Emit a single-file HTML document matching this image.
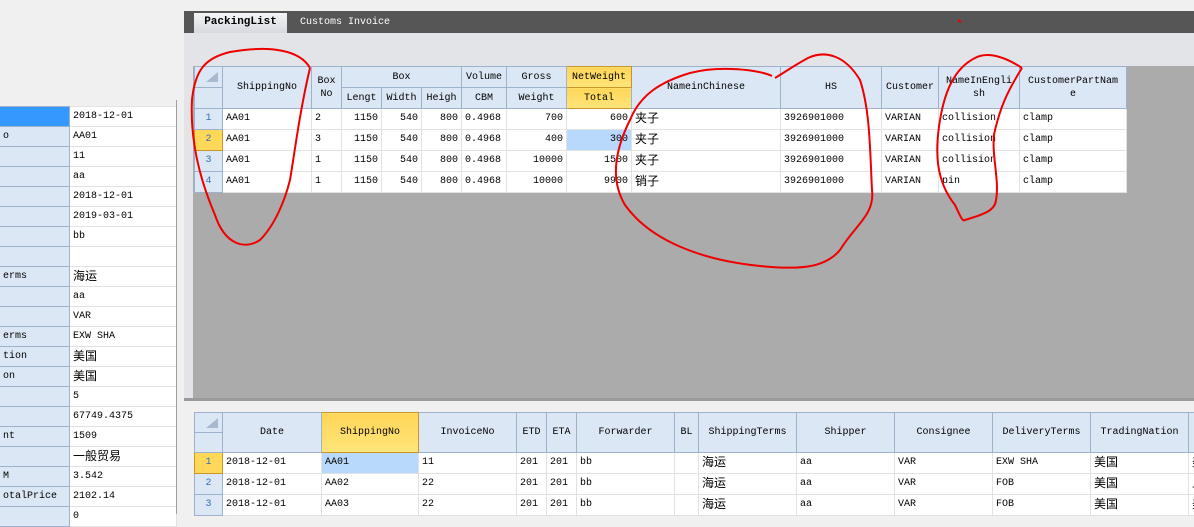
<!DOCTYPE html>
<html><head><meta charset="utf-8"><style>
body{margin:0;width:1194px;height:514px;overflow:hidden;background:#f0f0f0;position:relative;font-family:"Liberation Mono","Noto Sans CJK SC",monospace;font-size:10px;color:#000}
.abs{position:absolute}
table{border-collapse:collapse;table-layout:fixed;position:absolute}
td{padding:0 3px;white-space:nowrap;overflow:hidden;height:20px;line-height:18px;vertical-align:middle;border:1px solid #e2e2e2;background:#fff}
td.h{background:#dbe7f4;border-color:#9eb3cb;text-align:center;line-height:13px;white-space:normal}
td.rn{background:#dbe7f4;border-color:#9eb3cb;text-align:center;color:#3a6fb0}
td.sel{background:#ffd85a;border-color:#c9962a}
td.hs{background:linear-gradient(#ffd658,#ffe57a);border-color:#c9962a}
td.r{text-align:right}
td.blue{background:#b8d9fb}
.c{font-size:12px}
.pg td{height:19px}
</style></head><body>
<table class="pg" style="left:-1px;top:106px;width:177px">
<colgroup><col style="width:70px"><col style="width:107px"></colgroup>
<tr><td class="h" style="background:#3399ff"></td><td>2018-12-01</td></tr>
<tr><td class="h" style="text-align:left">o</td><td>AA01</td></tr>
<tr><td class="h"></td><td>11</td></tr>
<tr><td class="h"></td><td>aa</td></tr>
<tr><td class="h"></td><td>2018-12-01</td></tr>
<tr><td class="h"></td><td>2019-03-01</td></tr>
<tr><td class="h"></td><td>bb</td></tr>
<tr><td class="h"></td><td></td></tr>
<tr><td class="h" style="text-align:left">erms</td><td class="c">海运</td></tr>
<tr><td class="h"></td><td>aa</td></tr>
<tr><td class="h"></td><td>VAR</td></tr>
<tr><td class="h" style="text-align:left">erms</td><td>EXW SHA</td></tr>
<tr><td class="h" style="text-align:left">tion</td><td class="c">美国</td></tr>
<tr><td class="h" style="text-align:left">on</td><td class="c">美国</td></tr>
<tr><td class="h"></td><td>5</td></tr>
<tr><td class="h"></td><td>67749.4375</td></tr>
<tr><td class="h" style="text-align:left">nt</td><td>1509</td></tr>
<tr><td class="h"></td><td class="c">一般贸易</td></tr>
<tr><td class="h" style="text-align:left">M</td><td>3.542</td></tr>
<tr><td class="h" style="text-align:left">otalPrice</td><td>2102.14</td></tr>
<tr><td class="h"></td><td>0</td></tr>
</table>
<div class="abs" style="left:176px;top:100px;width:1px;height:414px;background:#a0a0a0"></div>
<div class="abs" style="left:184px;top:11px;width:1010px;height:22px;background:#565656"></div>
<div class="abs" style="left:194px;top:13px;width:93px;height:20px;background:linear-gradient(#f4f5f7,#d6d9df);font-weight:bold;font-size:11px;line-height:19px;text-align:center">PackingList</div>
<div class="abs" style="left:300px;top:13px;color:#fff;line-height:19px;font-size:10px">Customs Invoice</div>
<div class="abs" style="left:184px;top:33px;width:1010px;height:365px;background:#e3e4e8"></div>
<div class="abs" style="left:193px;top:66px;width:1001px;height:332px;background:#ababab"></div>
<table style="left:194px;top:66px;width:932px">
<colgroup><col style="width:28px"><col style="width:89px"><col style="width:30px"><col style="width:40px"><col style="width:40px"><col style="width:40px"><col style="width:45px"><col style="width:60px"><col style="width:65px"><col style="width:149px"><col style="width:101px"><col style="width:57px"><col style="width:81px"><col style="width:107px"></colgroup>
<tr><td class="h" style="height:19px"><svg width="18" height="12" style="float:right"><path d="M17 1V11H5Z" fill="#a8b9cf"/></svg></td><td class="h" rowspan="2">ShippingNo</td><td class="h" rowspan="2">Box<br>No</td><td class="h" colspan="3">Box</td><td class="h">Volume</td><td class="h">Gross</td><td class="h hs">NetWeight</td><td class="h" rowspan="2">NameinChinese</td><td class="h" rowspan="2">HS</td><td class="h" rowspan="2">Customer</td><td class="h" rowspan="2">NameInEngli<br>sh</td><td class="h" rowspan="2">CustomerPartNam<br>e</td></tr>
<tr><td class="h" style="height:19px"></td><td class="h">Lengt</td><td class="h">Width</td><td class="h">Heigh</td><td class="h">CBM</td><td class="h">Weight</td><td class="h hs">Total</td></tr>
<tr><td class="rn">1</td><td>AA01</td><td>2</td><td class="r">1150</td><td class="r">540</td><td class="r">800</td><td>0.4968</td><td class="r">700</td><td class="r">600</td><td class="c">夹子</td><td>3926901000</td><td>VARIAN</td><td>collision</td><td>clamp</td></tr>
<tr><td class="rn sel">2</td><td>AA01</td><td>3</td><td class="r">1150</td><td class="r">540</td><td class="r">800</td><td>0.4968</td><td class="r">400</td><td class="r blue">300</td><td class="c">夹子</td><td>3926901000</td><td>VARIAN</td><td>collision</td><td>clamp</td></tr>
<tr><td class="rn">3</td><td>AA01</td><td>1</td><td class="r">1150</td><td class="r">540</td><td class="r">800</td><td>0.4968</td><td class="r">10000</td><td class="r">1500</td><td class="c">夹子</td><td>3926901000</td><td>VARIAN</td><td>collision</td><td>clamp</td></tr>
<tr><td class="rn">4</td><td>AA01</td><td>1</td><td class="r">1150</td><td class="r">540</td><td class="r">800</td><td>0.4968</td><td class="r">10000</td><td class="r">9900</td><td class="c">销子</td><td>3926901000</td><td>VARIAN</td><td>pin</td><td>clamp</td></tr>
</table>
<div class="abs" style="left:184px;top:398px;width:1010px;height:3px;background:#9a9a9a"></div>
<table style="left:194px;top:412px;width:1040px">
<colgroup><col style="width:28px"><col style="width:99px"><col style="width:97px"><col style="width:98px"><col style="width:30px"><col style="width:30px"><col style="width:98px"><col style="width:24px"><col style="width:98px"><col style="width:98px"><col style="width:98px"><col style="width:98px"><col style="width:98px"><col style="width:46px"></colgroup>
<tr><td class="h" style="height:19px"><svg width="18" height="12" style="float:right"><path d="M17 1V11H5Z" fill="#a8b9cf"/></svg></td><td class="h" rowspan="2">Date</td><td class="h hs" rowspan="2">ShippingNo</td><td class="h" rowspan="2">InvoiceNo</td><td class="h" rowspan="2">ETD</td><td class="h" rowspan="2">ETA</td><td class="h" rowspan="2">Forwarder</td><td class="h" rowspan="2">BL</td><td class="h" rowspan="2">ShippingTerms</td><td class="h" rowspan="2">Shipper</td><td class="h" rowspan="2">Consignee</td><td class="h" rowspan="2">DeliveryTerms</td><td class="h" rowspan="2">TradingNation</td><td class="h" rowspan="2"></td></tr>
<tr><td class="h" style="height:19px"></td></tr>
<tr><td class="rn sel">1</td><td>2018-12-01</td><td class="blue">AA01</td><td>11</td><td>201</td><td>201</td><td>bb</td><td></td><td class="c">海运</td><td>aa</td><td>VAR</td><td>EXW SHA</td><td class="c">美国</td><td class="c">美</td></tr>
<tr><td class="rn">2</td><td>2018-12-01</td><td>AA02</td><td>22</td><td>201</td><td>201</td><td>bb</td><td></td><td class="c">海运</td><td>aa</td><td>VAR</td><td>FOB</td><td class="c">美国</td><td class="c">上</td></tr>
<tr><td class="rn">3</td><td>2018-12-01</td><td>AA03</td><td>22</td><td>201</td><td>201</td><td>bb</td><td></td><td class="c">海运</td><td>aa</td><td>VAR</td><td>FOB</td><td class="c">美国</td><td class="c">美</td></tr>
</table>
<svg class="abs" style="left:0;top:0" width="1194" height="514" fill="none" stroke="#e00" stroke-width="2">
<path d="M310 68 C300 50 270 45 230 52 C205 58 195 70 192 100 C190 140 200 180 215 215 C225 245 245 250 260 240 C275 225 285 200 290 180 C295 150 300 110 310 68"/>
<path d="M772 76 C760 70 720 65 690 73 C660 82 640 95 630 120 C615 150 610 180 625 205 C650 240 700 260 760 266 C800 270 825 268 840 250 C855 225 875 215 872 190 C870 150 870 110 860 80 C845 55 825 50 808 58 C795 65 785 72 775 78"/>
<path d="M1022 68 C1010 60 990 50 975 58 C955 68 945 90 940 120 C935 150 935 180 955 205 C960 215 962 222 965 220 C980 215 995 212 996 200 C1000 180 990 150 995 130 C1000 110 1005 95 1022 68"/>
<path d="M958 20 L961 22"/>
</svg>
</body></html>
